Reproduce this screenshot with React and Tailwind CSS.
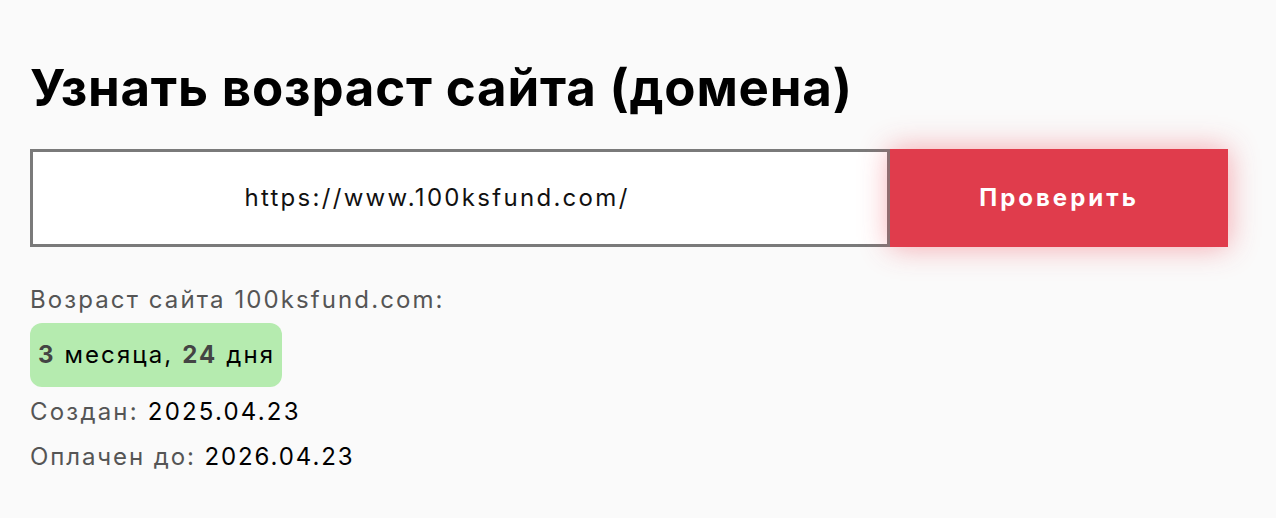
import React from 'react';

export default function App() {
  const font = { fontFamily: '"Inter", "Noto Sans", sans-serif' };
  return (
    <div className="min-h-[518px] bg-[#fafafa] px-[30px] pt-[58px]" style={font}>
      <h1 className="text-[51px] leading-[60px] font-bold text-black tracking-[0.8px]">
        Узнать возраст сайта (домена)
      </h1>

      <div className="mt-[31px] flex w-[1198px] h-[98px]">
        <div className="flex-1 bg-white border-[3px] border-[#7a7a7a] flex items-center justify-center pr-[46px]">
          <span className="text-[24px] tracking-[2.3px] text-[#111]">https://www.100ksfund.com/</span>
        </div>
        <button className="w-[338px] bg-[#e03c4c] text-white text-[24px] tracking-[3px] font-bold shadow-[0_0_28px_rgba(240,60,76,0.45)]">
          Проверить
        </button>
      </div>

      <div className="mt-[37px] text-[24px] leading-[32px] tracking-[2.1px] text-[#555]">
        Возраст сайта 100ksfund.com:
      </div>
      <div className="mt-[7px] inline-flex items-center h-[64px] pl-[8px] pr-[7px] rounded-[12px] bg-[#b5ebaf] text-[24px] tracking-[2.1px] text-black">
        <b className="text-[#444] font-bold">3</b>&nbsp;месяца,&nbsp;<b className="text-[#444] font-bold">24</b>&nbsp;дня
      </div>
      <div className="mt-[5px] text-[24px] leading-[40px] tracking-[2.2px] text-[#555]">
        Создан: <span className="text-black">2025.04.23</span>
      </div>
      <div className="mt-[5px] text-[24px] leading-[40px] tracking-[1.9px] text-[#555]">
        Оплачен до: <span className="text-black">2026.04.23</span>
      </div>
    </div>
  );
}
